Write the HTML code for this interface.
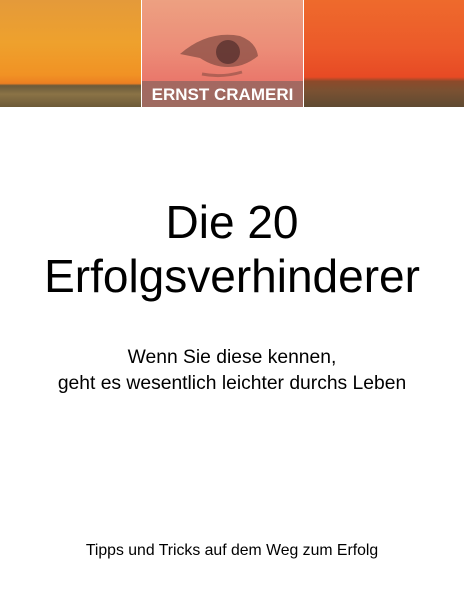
<!DOCTYPE html>
<html><head><meta charset="utf-8"><style>
body{margin:0;width:464px;height:600px;background:#fff;position:relative;overflow:hidden;font-family:"Liberation Sans",Arial,sans-serif;color:#000}
.p{position:absolute;top:0;height:107px}
.t{position:absolute;left:0;width:464px;text-align:center;white-space:nowrap;line-height:1}
</style></head><body>
<div class="p" style="left:0;width:141px;background:linear-gradient(#e49a3a 0%,#eea12d 40%,#f19224 70%,#ec7f22 78%,#6a5a3a 80%,#8a7346 88%,#6d5a38 100%)"></div>
<div class="p" style="left:142px;width:161px;background:linear-gradient(#eda081 0%,#ec8d78 45%,#e9766a 78%,#d58166 100%)"></div>
<div class="p" style="left:304px;width:160px;background:linear-gradient(#ee6a2c 0%,#ec5a2a 45%,#e74a24 72%,#8c4a2a 76%,#7a5132 85%,#5f4a32 100%)"></div>
<div style="position:absolute;left:142px;top:81px;width:161px;height:26px;background:rgba(140,100,95,.75)"></div>
<div style="position:absolute;left:142px;top:83px;width:161px;text-align:center;color:#fff;font-weight:bold;font-size:17px;line-height:24px">ERNST CRAMERI</div>
<svg style="position:absolute;left:178px;top:28px" width="84" height="52" viewBox="0 0 84 52">
<path d="M2 26 Q30 2 62 8 Q78 14 80 28 Q70 36 60 38 Q40 42 22 30 Z" fill="#8a4f45" opacity=".75"/>
<circle cx="50" cy="24" r="12" fill="#5a3230" opacity=".8"/>
<path d="M24 46 Q44 50 64 44" stroke="#8a4f45" stroke-width="3" fill="none" opacity=".6"/>
</svg>
<div class="t" style="top:199px;font-size:46px">Die 20</div>
<div class="t" style="top:253px;font-size:46px">Erfolgsverhinderer</div>
<div class="t" style="top:348px;font-size:19.3px">Wenn Sie diese kennen,</div>
<div class="t" style="top:374px;font-size:19.3px">geht es wesentlich leichter durchs Leben</div>
<div class="t" style="top:543px;font-size:15.8px">Tipps und Tricks auf dem Weg zum Erfolg</div>
</body></html>
